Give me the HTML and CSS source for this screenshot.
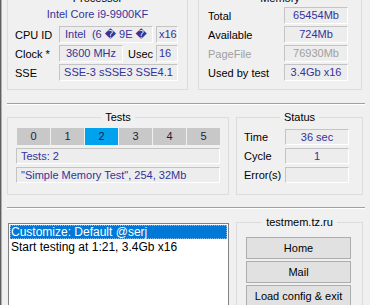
FILE: index.html
```html
<!DOCTYPE html>
<html lang="en">

<head>
    <meta charset="UTF-8">
    <title>TestMem5</title>
    <link rel="stylesheet" href="styles.css">
</head>

<body>
<div class="window">
    <div class="top">
        <div class="group proc">
            <div class="group-title"><span>Processor</span></div>
            <div class="cpu-name">Intel Core i9-9900KF</div>
            <div class="row">
                <span class="lbl">CPU ID</span>
                <span class="field left cpuid">Intel&nbsp; (6 &#xFFFD; 9E &#xFFFD;</span>
                <span class="field left tiny">x16</span>
            </div>
            <div class="row">
                <span class="lbl">Clock *</span>
                <span class="field clock">3600 MHz</span>
                <span class="lbl usec">Usec</span>
                <span class="field left tiny">16</span>
            </div>
            <div class="row">
                <span class="lbl">SSE</span>
                <span class="field sse">SSE-3 sSSE3 SSE4.1</span>
            </div>
        </div>

        <div class="group mem">
            <div class="group-title"><span>Memory</span></div>
            <div class="row">
                <span class="lbl">Total</span>
                <span class="field val">65454Mb</span>
            </div>
            <div class="row">
                <span class="lbl">Available</span>
                <span class="field val">724Mb</span>
            </div>
            <div class="row disabled">
                <span class="lbl">PageFile</span>
                <span class="field val">76930Mb</span>
            </div>
            <div class="row">
                <span class="lbl">Used by test</span>
                <span class="field val">3.4Gb x16</span>
            </div>
        </div>
    </div>

    <div class="sep"></div>

    <div class="middle">
        <div class="group tests">
            <div class="group-title"><span>Tests</span></div>
            <div class="tabs">
                <span class="tab">0</span>
                <span class="tab">1</span>
                <span class="tab active">2</span>
                <span class="tab">3</span>
                <span class="tab">4</span>
                <span class="tab">5</span>
            </div>
            <div class="field line">Tests: 2</div>
            <div class="field line">"Simple Memory Test", 254, 32Mb</div>
        </div>

        <div class="group status">
            <div class="group-title"><span>Status</span></div>
            <div class="row">
                <span class="lbl">Time</span>
                <span class="field val">36 sec</span>
            </div>
            <div class="row">
                <span class="lbl">Cycle</span>
                <span class="field val">1</span>
            </div>
            <div class="row">
                <span class="lbl">Error(s)</span>
                <span class="field val"></span>
            </div>
        </div>
    </div>

    <div class="sep"></div>

    <div class="bottom">
        <div class="log">
            <div class="log-item selected">Customize: Default @serj</div>
            <div class="log-item">Start testing at 1:21, 3.4Gb x16</div>
        </div>

        <div class="group site">
            <div class="group-title"><span>testmem.tz.ru</span></div>
            <button>Home</button>
            <button>Mail</button>
            <button>Load config &amp; exit</button>
        </div>
    </div>
</div>
</body>

</html>
```

FILE: styles.css
```css
html,
body {
    margin: 0;
    padding: 0;
    background: #f0f0f0;
}

body {
    width: 370px;
    height: 305px;
    overflow: hidden;
    font-family: "Liberation Sans", "DejaVu Sans", sans-serif;
    font-size: 11px;
    color: #000;
}

.window {
    width: 370px;
    height: 305px;
    box-sizing: border-box;
    border-left: 1px solid #5f5f5f;
    box-shadow: inset 1px 0 #b0b0b0;
    padding-left: 6px;
    overflow: hidden;
}

/* group box: frame with caption sitting on the top line */
.group {
    position: relative;
    box-sizing: border-box;
    border: 1px solid #dcdcdc;
}

.group-title {
    position: absolute;
    top: -8px;
    left: 0;
    right: 0;
    display: flex;
    justify-content: center;
    line-height: 14px;
}

.group-title span {
    background: #f0f0f0;
    padding: 0 4px;
}

.top {
    display: flex;
    gap: 10px;
    margin-top: -2px;
}

.proc {
    width: 181px;
    height: 92px;
    padding: 8px 0 0 7px;
}

.mem {
    width: 164px;
    height: 92px;
    padding: 8px 0 0 9px;
}

.row {
    display: flex;
    align-items: center;
    height: 17px;
    margin-bottom: 2px;
}

.lbl {
    width: 44px;
    white-space: nowrap;
}

.mem .lbl {
    width: 76px;
}

.status .lbl {
    width: 41px;
}

.field {
    box-sizing: border-box;
    height: 17px;
    line-height: 15px;
    border: 1px solid;
    border-color: #c4c4c4 #ffffff #ffffff #c4c4c4;
    background: #ededed;
    color: #33339a;
    text-align: center;
    white-space: nowrap;
    overflow: hidden;
}

.field.left {
    text-align: left;
    padding-left: 5px;
}

.cpu-name {
    height: 17px;
    line-height: 15px;
    margin-bottom: 2px;
    text-align: center;
    color: #33339a;
    padding-right: 7px;
}

.cpuid {
    width: 94px;
    margin-right: 3px;
}

.tiny {
    width: 22px;
    padding-left: 2px !important;
}

.clock {
    width: 64px;
}

.usec {
    width: 33px;
    overflow: hidden;
    padding-left: 5px;
    padding-right: 2px;
    box-sizing: border-box;
}

.sse {
    width: 119px;
}

.val {
    width: 64px;
}

.disabled .lbl,
.disabled .field {
    color: #a0a0a0;
}

.sep {
    height: 1px;
    width: 358px;
    background: #a0a0a0;
    border-bottom: 1px solid #fff;
}

.top + .sep {
    margin-top: 13px;
}

.middle {
    display: flex;
    gap: 7px;
    margin-top: 12px;
}

.tests {
    width: 222px;
    height: 78px;
    padding: 10px 0 0 8px;
}

.tabs {
    display: flex;
    gap: 1px;
    width: 203px;
    margin-left: 1px;
    margin-bottom: 3px;
}

.tab {
    flex: 1;
    height: 17px;
    line-height: 17px;
    text-align: center;
    background: #c8c8c8;
    color: #1c1c40;
}

.tab.active {
    background: #00a2ed;
}

.field.line {
    width: 204px;
    height: 16px;
    line-height: 14px;
    text-align: left;
    padding-left: 4px;
    margin-bottom: 3px;
}

.status {
    width: 127px;
    height: 78px;
    padding: 11px 0 0 7px;
}

.status .row {
    height: 16px;
    margin-bottom: 3px;
}

.status .field {
    height: 16px;
    line-height: 14px;
}

.middle + .sep {
    margin-top: 12px;
}

.bottom {
    display: flex;
    gap: 7px;
    margin-top: 14px;
}

.log {
    width: 221px;
    height: 100px;
    box-sizing: border-box;
    margin-left: 1px;
    border: 1px solid #828282;
    background: #fff;
    padding: 1px;
    font-size: 12px;
}

.log-item {
    height: 14px;
    line-height: 14px;
    padding-left: 1px;
    margin-bottom: 1px;
    white-space: nowrap;
}

.log-item.selected {
    background: #0078d7;
    color: #fff;
    outline: 1px dotted #7fbaf0;
    outline-offset: -1px;
}

.site {
    width: 127px;
    height: 100px;
    margin-top: -1px;
    padding: 14px 0 0 9px;
}

button {
    display: block;
    width: 105px;
    height: 22px;
    margin-bottom: 2px;
    padding: 0;
    font-family: inherit;
    font-size: 11px;
    color: #000;
    background: #e1e1e1;
    border: 1px solid #adadad;
    border-radius: 0;
    outline: none;
}
```
